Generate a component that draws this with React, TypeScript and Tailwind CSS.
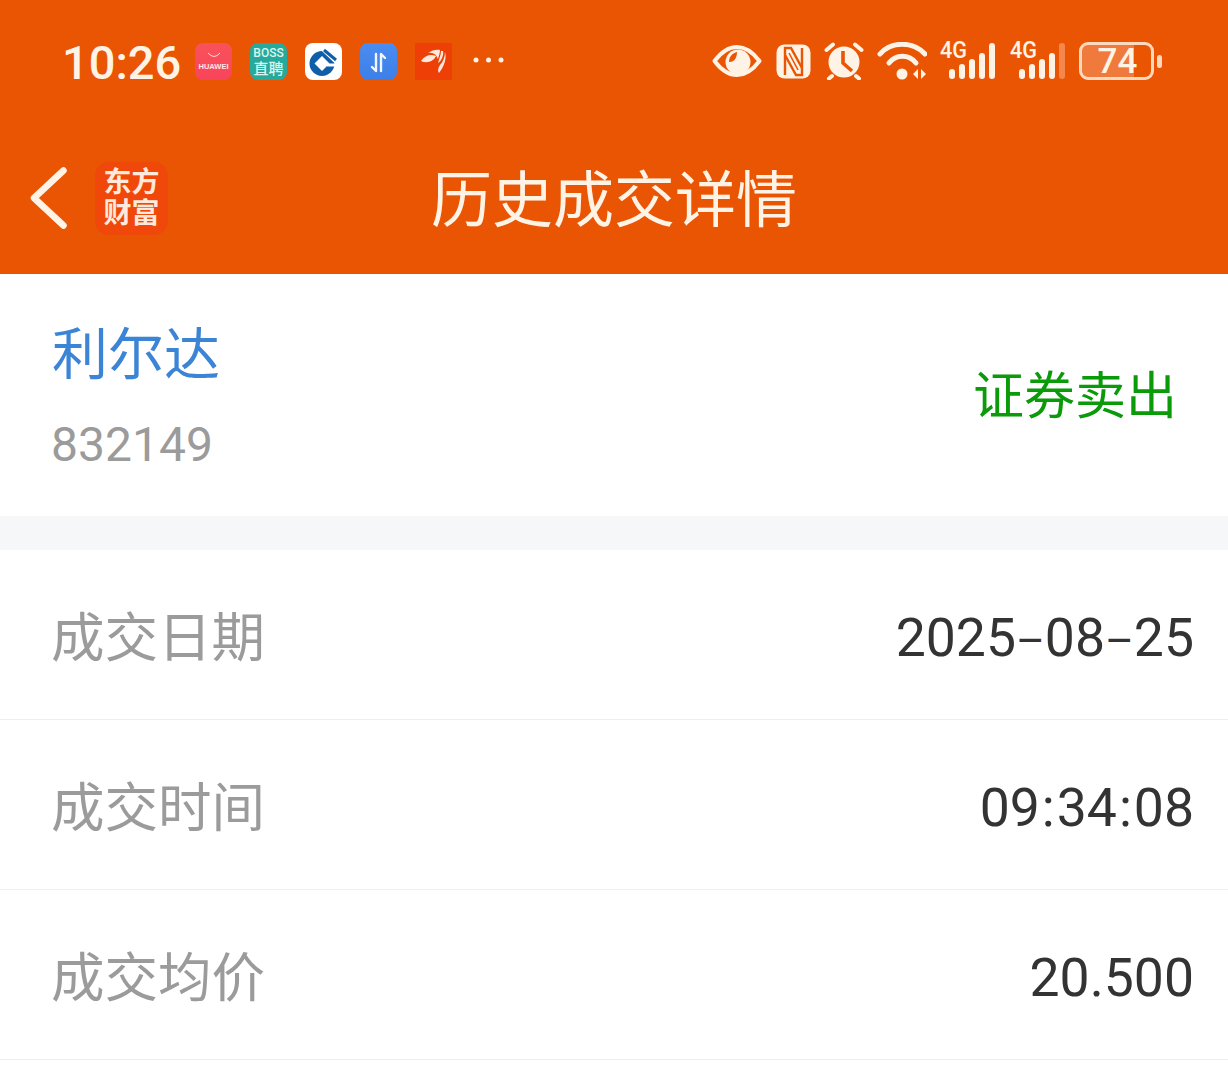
const cjk = "font-['Noto_Sans_CJK_SC','Noto_Sans',sans-serif]"

function AppIcon({ className, children }: { className: string; children: React.ReactNode }) {
  return (
    <div className={`w-[37px] h-[37px] flex flex-col items-center justify-center overflow-hidden ${className}`}>
      {children}
    </div>
  )
}

function Signal({ last }: { last: string }) {
  const bars = [
    { x: 10, h: 10 },
    { x: 20, h: 15 },
    { x: 30, h: 20 },
    { x: 40, h: 26 },
    { x: 50, h: 36 },
  ]
  return (
    <div className="relative w-[57px] h-[38px]">
      <svg width="57" height="38" viewBox="0 0 57 38" className="absolute left-0 top-0">
        {bars.map((b, i) => (
          <rect key={i} x={b.x} y={37 - b.h} width="6" height={b.h} rx="3" fill={i === 4 ? last : '#fff3e6'} />
        ))}
      </svg>
      <span className="absolute left-[1px] top-[-4px] text-[24px] leading-[24px] font-medium text-[#fff3e6] font-['Roboto',sans-serif] scale-x-[0.9] origin-left">
        4G
      </span>
    </div>
  )
}

function StatusBar() {
  return (
    <div className="h-[122px] pl-[62px] pr-[66px] flex items-center justify-between text-[#fff3e6]">
      <div className="flex items-center">
        <span className="w-[133px] mt-[2px] text-[47px] leading-none font-medium font-['Roboto',sans-serif]">10:26</span>
        <div className="flex items-center gap-[18px]">
          <AppIcon className="rounded-[8px] bg-[linear-gradient(180deg,#f9525a,#f8445c)]">
            <svg width="14" height="6" viewBox="0 0 14 6" className="mb-[4px]">
              <path d="M1 1 Q7 8 13 1" fill="none" stroke="#ffd9dc" strokeWidth="1" />
            </svg>
            <span className="text-[7.5px] leading-[9px] font-bold text-[#ffe6e6] font-['Liberation_Sans',sans-serif]">HUAWEI</span>
          </AppIcon>
          <AppIcon className="rounded-[8px] bg-[#27a99b]">
            <span className="text-[12px] leading-[13px] font-medium text-[#d9f5f0] font-['Roboto',sans-serif]">BOSS</span>
            <span className={`text-[15px] leading-[16px] font-medium text-[#d9f5f0] ${cjk}`}>直聘</span>
          </AppIcon>
          <AppIcon className="rounded-[8px] bg-white">
            <svg width="37" height="37" viewBox="0 0 37 37">
              <circle cx="17" cy="20.5" r="12.5" fill="#0f5ea8" />
              <path d="M17 13 L24.5 20.5 L17 28 L9.5 20.5 Z" fill="#fff" />
              <path d="M16 3 L35 21" stroke="#fff" strokeWidth="6" />
              <path d="M19 7 L31 17" stroke="#0f5ea8" strokeWidth="3" />
              <path d="M22 22 L33 22" stroke="#fff" strokeWidth="3" />
            </svg>
          </AppIcon>
          <AppIcon className="rounded-[8px] bg-[linear-gradient(180deg,#4a8cf0,#3c7fe8)]">
            <svg width="37" height="37" viewBox="0 0 37 37" fill="none" stroke="#f2f7ff" strokeWidth="2.4" strokeLinecap="round" strokeLinejoin="round">
              <path d="M16 11 V28 L12 24" />
              <path d="M21 28 V11 L25 15" />
            </svg>
          </AppIcon>
          <AppIcon className="bg-[#ee3f06]">
            <svg width="37" height="37" viewBox="0 0 37 37" fill="#ffe9dc">
              <path d="M6 18 C10 12 16 11 21 13 C19 18 12 21 6 18 Z" />
              <path d="M13 10 C17 7 22 6 25 7 C25 10 24 12 23 16 C21 11 18 9 13 10 Z" />
              <path d="M26 8 L28 8 C29 12 26 19 23 20 C24 16 26 12 26 8 Z" />
              <path d="M30 9 C32 15 29 24 24 30 C22 27 24 24 25 22 C28 19 30 14 30 9 Z" />
            </svg>
          </AppIcon>
          <svg width="32" height="6" viewBox="0 0 32 6" className="ml-[3px] mb-[2px]">
            <circle cx="3" cy="3" r="2.5" fill="#fff3e6" />
            <circle cx="15.5" cy="3" r="2.5" fill="#fff3e6" />
            <circle cx="28" cy="3" r="2.5" fill="#fff3e6" />
          </svg>
        </div>
      </div>

      <div className="flex items-center">
        {/* eye */}
        <svg width="50" height="34" viewBox="0 0 50 34" className="mr-[14px]">
          <path d="M2.5 17 C10 7 18 3 25 3 C32 3 40 7 47.5 17 C40 27 32 31 25 31 C18 31 10 27 2.5 17 Z" fill="none" stroke="#fff3e6" strokeWidth="4" strokeLinejoin="round" />
          <circle cx="26" cy="18" r="12.5" fill="#fff3e6" />
          <path d="M17 18 C17 12 21 9 25 8 C25 13 23 18 17 18 Z" fill="#ea5504" />
        </svg>
        {/* nfc */}
        <svg width="35" height="35" viewBox="0 0 35 35" className="mr-[13px]">
          <rect x="0.5" y="0.5" width="34" height="34" rx="8" fill="#fff3e6" />
          <path d="M9 31 V4 H15 L26 24" fill="none" stroke="#ea5504" strokeWidth="2.4" />
          <path d="M26 4 V31 H20 L9 11" fill="none" stroke="#ea5504" strokeWidth="2.4" />
          <path d="M13 9 L22 26" fill="none" stroke="#ea5504" strokeWidth="1.6" />
        </svg>
        {/* alarm */}
        <svg width="40" height="38" viewBox="0 0 40 38" className="mr-[13px]">
          <circle cx="20" cy="20" r="15.5" fill="#fff3e6" />
          <path d="M2.5 8 L9 2.5 M31 2.5 L37.5 8 M8 34 L5 36.5 M32 34 L35 36.5" stroke="#fff3e6" strokeWidth="4" strokeLinecap="round" />
          <path d="M19 9 V21 L28 29" fill="none" stroke="#ea5504" strokeWidth="3.6" />
        </svg>
        {/* wifi */}
        <svg width="50" height="38" viewBox="0 0 50 38" className="mr-[12px]">
          <path d="M3 12 C14 -1 36 -1 48 12" fill="none" stroke="#fff3e6" strokeWidth="5" strokeLinecap="round" />
          <path d="M12 21 C19 12 32 12 39 21" fill="none" stroke="#fff3e6" strokeWidth="5" strokeLinecap="round" />
          <circle cx="25" cy="32" r="5.5" fill="#fff3e6" />
          <path d="M36 32 L41 27 V37 Z M44 27 L49 32 L44 37 Z" fill="#fff3e6" />
        </svg>
        <Signal last="#fff3e6" />
        <div className="w-[13px]" />
        <Signal last="#f6874a" />
        <div className="w-[13px]" />
        {/* battery */}
        <div className="flex items-center">
          <div className="w-[75px] h-[38px] rounded-[9px] border-[3px] border-[#ffd9bd] bg-[linear-gradient(90deg,#ef7a3c_0%,#ef7a3c_76%,transparent_76%)] flex items-center justify-center">
            <span className="text-[35px] leading-none font-medium font-['Roboto',sans-serif] text-[#fff3e6] ml-[2px]">74</span>
          </div>
          <div className="ml-[3px] w-[5px] h-[13px] rounded-full bg-[#ffd9bd]" />
        </div>
      </div>
    </div>
  )
}

function Header() {
  return (
    <div className="h-[152px] grid grid-cols-[1fr_auto_1fr] items-center">
      <div className="flex items-center pl-[30px]">
        <svg width="37" height="62" viewBox="0 0 37 62" fill="none" stroke="#fff3e6" strokeWidth="6.5" strokeLinecap="round" strokeLinejoin="round">
          <path d="M33.5 3.5 L4 31 L33.5 58.5" />
        </svg>
        <div className={`ml-[28px] pb-[4px] w-[73px] h-[73px] rounded-[14px] bg-[#f0470a] flex flex-col items-center justify-center text-[#ffe9dc] text-[28px] leading-[31px] font-bold ${cjk}`}>
          <span>东方</span>
          <span>财富</span>
        </div>
      </div>
      <h1 className={`mb-[6px] text-[61px] leading-none font-normal text-[#fff3e6] ${cjk}`}>历史成交详情</h1>
      <div />
    </div>
  )
}

function Row({ label, children }: { label: string; children: React.ReactNode }) {
  return (
    <div className="h-[170px] pl-[51px] pr-[34px] flex items-center justify-between border-b border-[#eeeeee]">
      <span className={`mb-[2px] text-[53.5px] leading-none text-[#9b9b9b] ${cjk}`}>{label}</span>
      <span className="mt-[6px] text-[53.5px] leading-none text-[#333333] font-['Roboto',sans-serif]">{children}</span>
    </div>
  )
}

export default function App() {
  return (
    <div className="w-[1228px] h-[1075px] bg-white overflow-hidden">
      <div className="bg-[#ea5504]">
        <StatusBar />
        <Header />
      </div>

      <div className="h-[242px] pl-[52px] pr-[51px] flex items-center justify-between">
        <div className="flex flex-col">
          <span className={`text-[56px] leading-none text-[#3c84d6] ${cjk}`}>利尔达</span>
          <span className="mt-[43px] -ml-[1px] text-[48px] leading-none text-[#9b9b9b] font-['Roboto',sans-serif]">832149</span>
        </div>
        <span className={`mb-[6px] text-[51px] leading-none text-[#0a9a0a] ${cjk}`}>证券卖出</span>
      </div>

      <div className="h-[34px] bg-[#f6f7f9]" />

      <Row label="成交日期">
        2025<span className="text-[44px]">–</span>08<span className="text-[44px]">–</span>25
      </Row>
      <Row label="成交时间">
        09<span className="mx-[2px]">:</span>34<span className="mx-[2px]">:</span>08
      </Row>
      <Row label="成交均价">20.500</Row>
    </div>
  )
}
